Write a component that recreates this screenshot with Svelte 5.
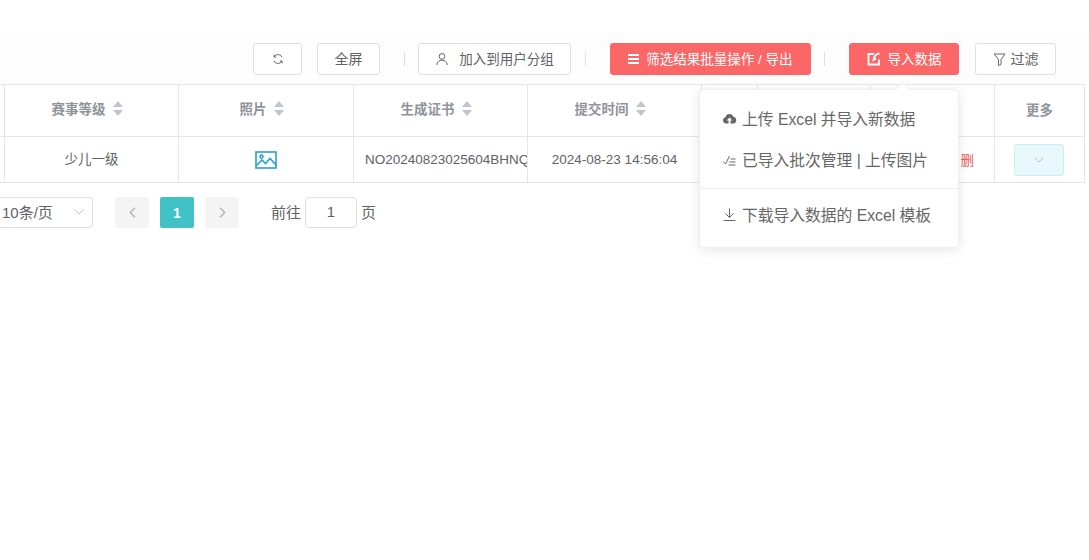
<script lang="ts">
	const widths = [174, 175, 174, 174, 56, 113, 124, 90];
	const sortable = ['赛事等级', '照片', '生成证书', '提交时间'];
	let pageSize = '10条/页';
	let page = 1;
</script>

<div class="page">
	<div class="toolbar">
		<button class="btn icon-only" aria-label="刷新">
			<svg width="12" height="12" viewBox="0 0 12 12" fill="none" stroke="#666" stroke-width="1">
				<path d="M10 4.2A4.3 4.3 0 0 0 2.6 3.2L2 4M2 7.8a4.3 4.3 0 0 0 7.4 1L10 8" />
				<path d="M2 1.6V4h2.2M10 10.4V8H7.8" />
			</svg>
		</button>
		<button class="btn fullscreen">全屏</button>
		<span class="sep first"></span>
		<button class="btn group">
			<svg width="14" height="14" viewBox="0 0 14 14" fill="none" stroke="#666" stroke-width="1">
				<circle cx="7" cy="4.4" r="2.9" />
				<path d="M1.800 13c0-3 2.300-4.800 5.200-4.800s5.200 1.800 5.200 4.800" />
			</svg>
			<span>加入到用户分组</span>
		</button>
		<span class="sep second"></span>
		<button class="btn danger batch">
			<svg width="11" height="10" viewBox="0 0 11 10" fill="#fff"><path d="M0 0h11v2H0zM0 4h11v2H0zM0 8h11v2H0z" /></svg>
			<span>筛选结果批量操作 / 导出</span>
		</button>
		<span class="sep third"></span>
		<button class="btn danger import">
			<svg width="14" height="14" viewBox="0 0 14 14" fill="none" stroke="#fff" stroke-width="1.8">
				<path d="M7 2H1.500v10.500H12V7.500" />
				<path d="M12.500 1.500C9 2 7 4 6.500 8L9 6.500" />
			</svg>
			<span>导入数据</span>
		</button>
		<button class="btn filter">
			<svg width="13" height="13" viewBox="0 0 13 13" fill="none" stroke="#666" stroke-width="1">
				<path d="M1 1h11L8 6.500v5L5.500 12.500v-6z" />
			</svg>
			<span>过滤</span>
		</button>
	</div>

	<div class="table">
		<div class="tr head">
			<div class="stub"></div>
			{#each sortable as label, i}
				<div class="cell sortable" style="width: {widths[i]}px">
					<span class="label">{label}</span>
					<span class="sort"><i class="up"></i><i class="down"></i></span>
				</div>
			{/each}
			<div class="cell" style="width: {widths[4]}px"></div>
			<div class="cell" style="width: {widths[5]}px"></div>
			<div class="cell" style="width: {widths[6]}px"></div>
			<div class="cell" style="width: {widths[7]}px">更多</div>
		</div>
		<div class="tr body">
			<div class="stub"></div>
			<div class="cell level" style="width: {widths[0]}px">少儿一级</div>
			<div class="cell flush" style="width: {widths[1]}px">
				<svg width="22" height="18" viewBox="0 0 22 18" fill="none" stroke="#2a9fd0" stroke-width="1.6">
					<rect x="1" y="1" width="20" height="16" />
					<circle cx="6.500" cy="5.500" r="1.500" />
					<path d="M1.500 14.500 7 9l3.500 3.500L15 7.500l6 6.500" />
				</svg>
			</div>
			<div class="cell cert flush" style="width: {widths[2]}px"><span>NO20240823025604BHNQ</span></div>
			<div class="cell flush" style="width: {widths[3]}px">2024-08-23 14:56:04</div>
			<div class="cell" style="width: {widths[4]}px"></div>
			<div class="cell" style="width: {widths[5]}px"></div>
			<div class="cell del" style="width: {widths[6]}px">删</div>
			<div class="cell flush more" style="width: {widths[7]}px">
				<button class="expand" aria-label="更多">
					<svg width="10" height="6" viewBox="0 0 10 6" fill="none" stroke="#9cc" stroke-width="1"><path d="M.5.500 5 5 9.500.500" /></svg>
				</button>
			</div>
		</div>
	</div>

	<div class="pager">
		<div class="size">
			<span>{pageSize}</span>
			<svg width="10" height="6" viewBox="0 0 10 6" fill="none" stroke="#c0c4cc" stroke-width="1"><path d="M.5.500 5 5 9.500.500" /></svg>
		</div>
		<div class="pages">
			<button class="nav" aria-label="上一页">
				<svg width="7" height="11" viewBox="0 0 7 11" fill="none" stroke="#b4b4b4" stroke-width="1.5"><path d="M6 .8 1.300 5.500 6 10.200" /></svg>
			</button>
			<button class="num">{page}</button>
			<button class="nav" aria-label="下一页">
				<svg width="7" height="11" viewBox="0 0 7 11" fill="none" stroke="#b4b4b4" stroke-width="1.5"><path d="M1 .8 5.700 5.500 1 10.200" /></svg>
			</button>
		</div>
		<div class="jump">
			<span>前往</span>
			<span class="jump-input">{page}</span>
			<span>页</span>
		</div>
	</div>

	<div class="popover">
		<span class="arrow"></span>
		<ul class="items">
			<li>
				<svg width="15" height="12" viewBox="0 0 14 12" fill="#666">
					<path d="M3.500 10.500A3.200 3.200 0 0 1 3 4.200 4.200 4.200 0 0 1 11 3.800a3.400 3.400 0 0 1-.2 6.700H8V7.500h1.800L7 4.500 4.200 7.500H6v3z" />
				</svg>
				<span>上传 Excel 并导入新数据</span>
			</li>
			<li>
				<svg width="15" height="12" viewBox="0 0 14 12" fill="none" stroke="#666" stroke-width="1">
					<path d="M.5 7.500 3 10l4-8M8 5h5M7 8h6M6 11h7" />
				</svg>
				<span>已导入批次管理 | 上传图片</span>
			</li>
			<li class="divided">
				<svg width="15" height="13" viewBox="0 0 14 13" fill="none" stroke="#666" stroke-width="1">
					<path d="M7 .5v8.500M3 5.500 7 9.500l4-4M1 12.500h12" />
				</svg>
				<span>下载导入数据的 Excel 模板</span>
			</li>
		</ul>
	</div>
</div>

<style>
	:global(body) {
		margin: 0;
		background: #fff;
	}
	.page {
		position: relative;
		width: 1089px;
		height: 560px;
		box-sizing: border-box;
		padding-top: 32px;
		overflow: hidden;
		font-family: 'Liberation Sans', 'Noto Sans CJK SC', sans-serif;
		font-size: 14px;
		color: #606266;
	}
	.toolbar {
		display: flex;
		align-items: flex-start;
		height: 52px;
		box-sizing: border-box;
		padding: 11px 0 0 253px;
		background: #fdfdfd;
	}
	button {
		font: inherit;
		cursor: pointer;
	}
	.btn {
		display: flex;
		align-items: center;
		justify-content: center;
		gap: 8px;
		height: 32px;
		padding: 0;
		box-sizing: border-box;
		border: 1px solid #dcdfe6;
		border-radius: 3px;
		background: #fff;
		color: #606266;
		font-size: 13.5px;
	}
	.btn span {
		padding-bottom: 3px;
	}
	.fullscreen {
		padding-bottom: 3px;
	}
	.icon-only {
		width: 49px;
	}
	.fullscreen {
		width: 63px;
		margin-left: 15px;
		font-size: 14px;
	}
	.group {
		width: 153px;
		gap: 10px;
	}
	.batch {
		width: 201px;
		gap: 7px;
		background: #f76f6f;
		border-color: #f76f6f;
	}
	.import {
		width: 110px;
		gap: 7px;
	}
	.filter {
		width: 81px;
		margin-left: 16px;
		gap: 5px;
		font-size: 14px;
	}
	.danger {
		border-color: #fb6666;
		background: #fb6666;
		color: #fff;
	}
	.sep {
		flex: none;
		width: 1px;
		height: 14px;
		margin-top: 9px;
		background: #dcdfe6;
	}
	.sep.first {
		margin-left: 24px;
		margin-right: 13px;
	}
	.sep.second {
		margin-left: 14px;
		margin-right: 24px;
	}
	.sep.third {
		margin-left: 13px;
		margin-right: 24px;
	}
	.table {
		width: 1085px;
	}
	.tr {
		display: flex;
		box-sizing: border-box;
		border-bottom: 1px solid #e6e6e6;
	}
	.head {
		height: 53px;
		border-top: 1px solid #e6e6e6;
		font-weight: 700;
		font-size: 13.5px;
		color: #909399;
	}
	.head .cell {
		gap: 7px;
		padding-bottom: 4px;
	}
	.head .cell.sortable {
		padding-right: 9px;
	}
	.label {
		padding-bottom: 2px;
	}
	.body {
		height: 46px;
		font-size: 13.5px;
	}
	.body .cell {
		padding-bottom: 2px;
	}
	.body .cell.level {
		padding-bottom: 4px;
	}
	.body .cell.flush {
		padding-bottom: 0;
	}
	.body .cell.more {
		padding-right: 1px;
	}
	.stub {
		width: 5px;
		box-sizing: border-box;
		border-right: 1px solid #e6e6e6;
		flex: none;
	}
	.cell {
		display: flex;
		align-items: center;
		justify-content: center;
		box-sizing: border-box;
		border-right: 1px solid #e6e6e6;
		flex: none;
		overflow: hidden;
		white-space: nowrap;
	}
	.body .cert {
		justify-content: flex-start;
		padding-left: 11px;
	}
	.del {
		justify-content: flex-end;
		padding-right: 20px;
		color: #e8605c;
		font-size: 13.5px;
	}
	.sort {
		display: flex;
		flex-direction: column;
		gap: 3px;
	}
	.sort i {
		display: block;
		width: 0;
		height: 0;
		border-left: 5.5px solid transparent;
		border-right: 5.5px solid transparent;
	}
	.sort .up {
		border-bottom: 6px solid #c0c4cc;
	}
	.sort .down {
		border-top: 6px solid #c0c4cc;
	}
	.expand {
		display: flex;
		align-items: center;
		justify-content: center;
		width: 50px;
		height: 32px;
		padding: 0;
		border: 1px solid #c8eef2;
		border-radius: 3px;
		background: #e9f9fb;
	}
	.pager {
		display: flex;
		align-items: center;
		height: 31px;
		margin-top: 14px;
		font-size: 15px;
	}
	.size {
		display: flex;
		align-items: center;
		justify-content: space-between;
		width: 93px;
		height: 31px;
		box-sizing: border-box;
		padding: 0 8px 2px 2px;
		border: 1px solid #dcdfe6;
		border-left: 0;
		border-radius: 0 4px 4px 0;
	}
	.pages {
		display: flex;
		gap: 11px;
		margin-left: 22px;
	}
	.pages button {
		display: flex;
		align-items: center;
		justify-content: center;
		width: 34px;
		height: 31px;
		padding: 0;
		border: 0;
		border-radius: 2px;
	}
	.nav {
		background: #f4f4f5;
	}
	.num {
		background: #40c2c6;
		color: #fff;
		font-weight: 700;
		font-size: 14px;
	}
	.jump {
		display: flex;
		align-items: center;
		gap: 4px;
		margin-left: 32px;
	}
	.jump > span {
		padding-bottom: 3px;
	}
	.jump-input {
		display: flex;
		align-items: center;
		justify-content: center;
		width: 52px;
		height: 31px;
		box-sizing: border-box;
		border: 1px solid #dcdfe6;
		border-radius: 4px;
	}
	.popover {
		position: absolute;
		top: 89px;
		left: 699px;
		width: 260px;
		height: 159px;
		box-sizing: border-box;
		padding: 8px 0;
		background: #fff;
		border: 1px solid #ebeef5;
		border-radius: 4px;
		box-shadow: 0 2px 12px rgba(0, 0, 0, 0.1);
	}
	.arrow {
		position: absolute;
		top: -6px;
		left: 197px;
		width: 10px;
		height: 10px;
		background: #fff;
		transform: rotate(45deg);
		border-top: 1px solid #ebeef5;
		border-left: 1px solid #ebeef5;
	}
	.items {
		list-style: none;
		margin: 0;
		padding: 0;
	}
	.items li {
		display: flex;
		align-items: center;
		gap: 5px;
		height: 41px;
		padding-left: 22px;
		font-size: 15.75px;
		color: #666;
	}
	.items li.divided {
		height: 54px;
		box-sizing: border-box;
		margin-top: 8px;
		padding-bottom: 3px;
		border-top: 1px solid #ebeef5;
	}
</style>
